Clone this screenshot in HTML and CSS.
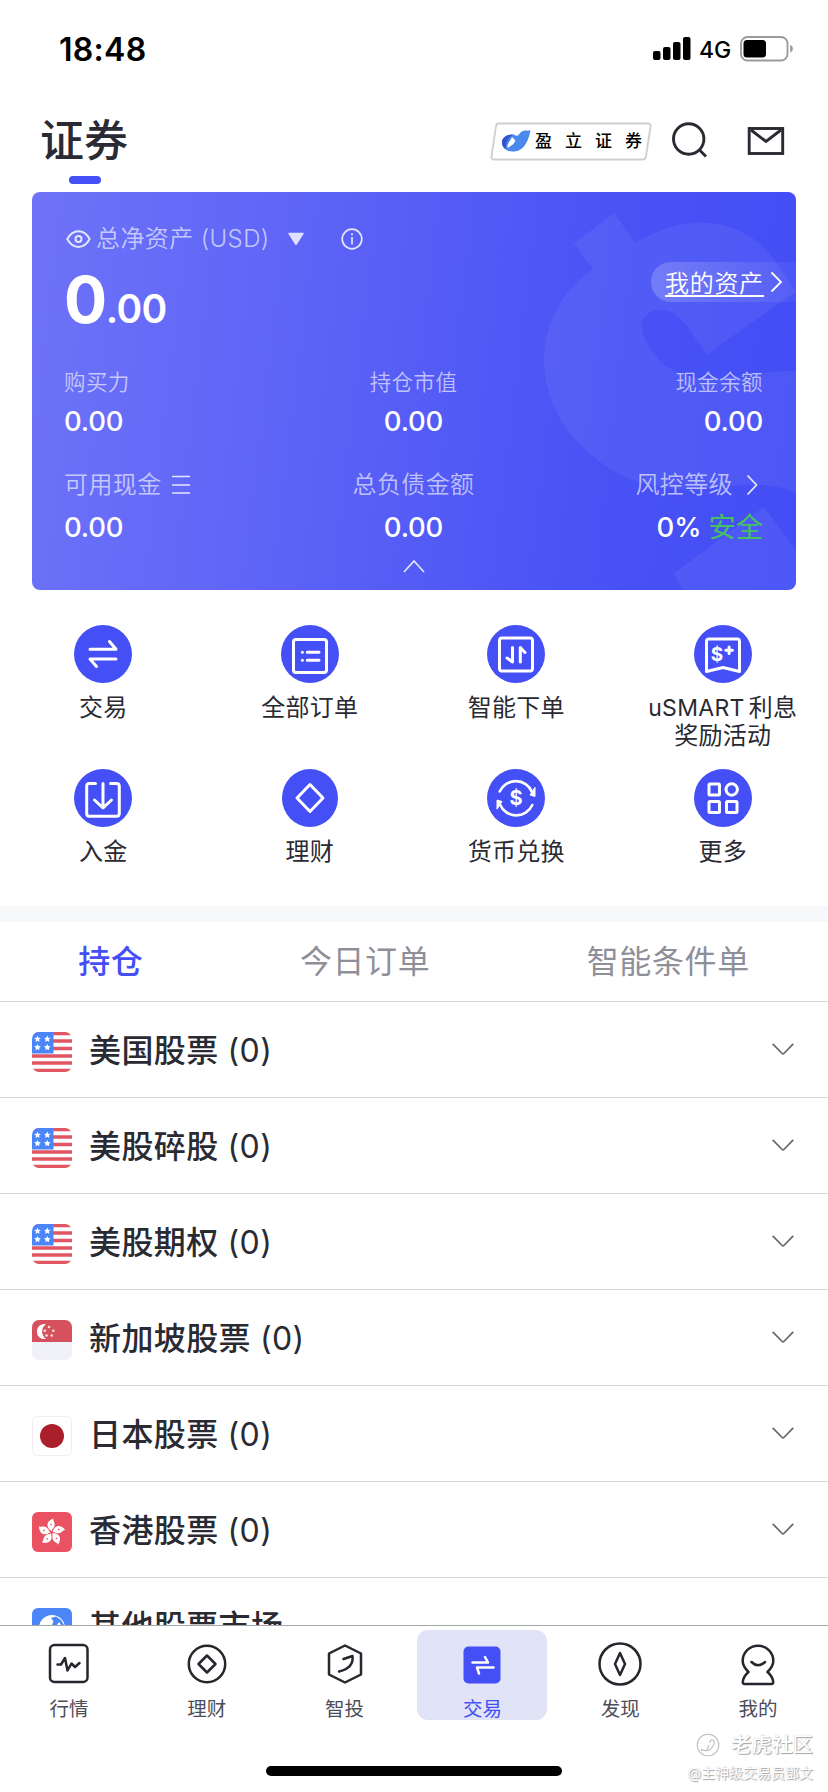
FILE: index.html
```html
<!DOCTYPE html>
<html lang="zh-CN">
<head>
<meta charset="utf-8">
<title>证券</title>
<link rel="stylesheet" href="styles.css">
</head>
<body>
<svg width="0" height="0" class="defs">
  <symbol id="flag-us" viewBox="0 0 40 40">
    <clipPath id="rc"><rect width="40" height="40" rx="7"/></clipPath>
    <g clip-path="url(#rc)">
      <rect width="40" height="40" fill="#fff"/>
      <path d="M0 1.500h40M0 9h40M0 16.500h40M0 24h40M0 31h40M0 38.500h40" stroke="#e25563" stroke-width="3.300"/>
      <rect width="21.500" height="21.500" fill="#4a86f7"/>
      <path id="star" fill="#fff" d="M5.500 3.600l1 2.100 2.300.3-1.700 1.600.4 2.300-2-1.100-2 1.100.4-2.300-1.700-1.600 2.300-.3z"/>
      <use href="#star" x="9.800"/><use href="#star" y="8.300"/><use href="#star" x="9.800" y="8.300"/>
    </g>
  </symbol>
  <symbol id="chev" viewBox="0 0 22 13"><path d="M1.200 1.300L10.200 10.500Q11 11.300 11.800 10.500L20.800 1.300" fill="none" stroke="#66666b" stroke-width="1.700" stroke-linecap="round"/></symbol>
</svg>
<div class="page">
  <div class="status">
    <span class="clock">18:48</span>
    <div class="status-right">
      <svg width="38" height="24" viewBox="0 0 38 24"><rect x="0" y="14" width="7.500" height="9" rx="2"/><rect x="10" y="10" width="7.500" height="13" rx="2"/><rect x="20" y="5" width="7.500" height="18" rx="2"/><rect x="30" y="0" width="7.500" height="23" rx="2"/></svg>
      <span class="net">4G</span>
      <svg width="54" height="26" viewBox="0 0 54 26"><rect x="1" y="1" width="46.500" height="23.500" rx="6.500" fill="none" stroke="#9b9b9b" stroke-width="1.800"/><rect x="3.500" y="4" width="22.500" height="17.500" rx="3.500"/><path d="M50.200 8.800a4.300 4.300 0 0 1 0 8z" fill="#9b9b9b"/></svg>
    </div>
  </div>
  <header class="head">
    <div class="title"><h1>证券</h1><i></i></div>
    <div class="tools">
      <div class="badge">
        <svg class="badge-bg" width="162" height="39" viewBox="0 0 162 39"><path d="M8.500 1.500H158Q161 1.500 160.500 4.500L156 34.500Q155.500 37.500 152.500 37.500H4Q1 37.500 1.500 34.500L6 4Q6.500 1.500 8.500 1.500Z" fill="#fff" stroke="#cfcfd0" stroke-width="1.800"/></svg>
        <svg width="30" height="24" viewBox="0 0 30 24"><path d="M13 5.500C6 5 .5 9 1 14C1.500 20 7 23 13 22.500C23 22 27.500 12 29.500 1C26.500 2.800 25 .5 21 2.500C17.500 4.300 17.500 9 13 5.500Z" fill="#4a88ee"/><path d="M12 5.500C6 5 .5 9 1 14C1.200 16.500 2.500 18.500 4.500 20C4.500 14 7 9 12 5.500Z" fill="#3454cf"/><path d="M11 8L14.500 11.500L12.500 15L6.800 19C5.500 14.500 9 13 11 8Z" fill="#fff"/></svg>
        <span>盈立证券</span>
      </div>
      <svg class="search" width="38" height="38" viewBox="0 0 38 38"><circle cx="17.700" cy="17" r="15.200"/><path d="M28.500 28L35 34.500"/></svg>
      <svg class="mail" width="38" height="30" viewBox="0 0 38 30"><rect x="2.200" y="2.500" width="33.500" height="25"/><path d="M4 4L19 15.500L34 4"/></svg>
    </div>
  </header>

  <section class="card">
    <svg class="mark" width="764" height="398" viewBox="0 0 764 398"><g transform="translate(382 -12) scale(.33333)" fill="#fff" fill-opacity=".06"><path d="M600 100L665 188C740 145 810 125 875 128C975 133 1050 185 1095 260L1146 335L878 523L820 440C790 400 765 388 735 390C690 393 670 430 692 475C730 560 800 600 900 595C990 590 1070 570 1146 573V940C1090 912 1030 912 960 917C860 925 770 945 640 893C480 820 390 680 390 540C392 420 455 320 538 268L480 190Z"/><path d="M1050 980L1146 1110V1230H805L780 1180Z"/></g></svg>
    <div class="net-row">
      <svg width="25" height="20" viewBox="0 0 25 20" fill="none" stroke="#e4e6fe" stroke-width="2"><path d="M1.300 10C7 -.5 18 -.5 23.700 10C18 20.500 7 20.500 1.300 10Z"/><circle cx="12.500" cy="10" r="3"/></svg>
      <span class="lbl net-lbl">总净资产 <span>(USD)</span></span>
      <svg class="tri" width="18" height="14" viewBox="0 0 18 14"><path d="M2 .8H16Q17.300 .8 16.500 2L10 12.300Q9 13.800 8 12.300L1.500 2Q.7 .8 2 .8Z" fill="#dfe1fe"/></svg>
      <svg class="info" width="24" height="24" viewBox="0 0 24 24" fill="none" stroke="#e4e6fe" stroke-width="1.700"><circle cx="12" cy="12" r="9.800"/><path d="M12 10v7.500M12 6.300v2"/></svg>
    </div>
    <div class="total"><b>0</b><small>.00</small></div>
    <a class="pill"><span>我的资产</span><svg width="13" height="22" viewBox="0 0 13 22"><path d="M1.500 1.500L11 11L1.500 20.500" fill="none" stroke="#fff" stroke-width="1.800"/></svg></a>
    <div class="stats first">
      <div><div class="lbl sm">购买力</div><div class="val">0.00</div></div>
      <div class="mid"><div class="lbl sm">持仓市值</div><div class="val">0.00</div></div>
      <div class="end"><div class="lbl sm">现金余额</div><div class="val">0.00</div></div>
    </div>
    <div class="stats second">
      <div><div class="lbl">可用现金<svg class="burger" width="18" height="20" viewBox="0 0 18 20"><path d="M0 1.500h18M0 10h18M0 18h18" stroke="#e4e6fe" stroke-width="1.700"/></svg></div><div class="val">0.00</div></div>
      <div class="mid"><div class="lbl">总负债金额</div><div class="val">0.00</div></div>
      <div class="end"><div class="lbl risk">风控等级<svg width="12" height="22" viewBox="0 0 12 22"><path d="M1.500 1.500L10.500 11L1.500 20.500" fill="none" stroke="#e4e6fe" stroke-width="1.800"/></svg></div><div class="val">0% <em>安全</em></div></div>
    </div>
    <svg class="fold" width="22" height="14" viewBox="0 0 22 14"><path d="M1 13L11 2L21 13" fill="none" stroke="#e4e6fe" stroke-width="1.700"/></svg>
  </section>

  <nav class="actions">
    <a><svg viewBox="0 0 58 58"><circle cx="29" cy="29" r="29"/><path class="s3" d="M16 24.300H42L35.500 16.500M42 34H16L22.500 41.500"/></svg><span>交易</span></a>
    <a><svg viewBox="0 0 58 58"><circle cx="29" cy="29" r="29"/><rect class="s3" x="12.500" y="14.500" width="33" height="33" rx="2.500"/><path class="s3" d="M21.300 27.300h.1M26.300 27.300H38M21.300 35.300h.1M26.300 35.300H38"/></svg><span>全部订单</span></a>
    <a><svg viewBox="0 0 58 58"><circle cx="29" cy="29" r="29"/><rect class="s3" x="12.500" y="13" width="33" height="33" rx="2.500"/><path class="s3" d="M25.500 22.500V37L20 33M33.300 37V22.500L38 27.500"/></svg><span>智能下单</span></a>
    <a><svg viewBox="0 0 58 58"><circle cx="29" cy="29" r="29"/><path class="s3" d="M15 14H43Q45.500 14 45.500 16.500V46.500L29 42.500L12.500 46.500V16.500Q12.500 14 15 14Z"/><text x="23" y="35.500" font-size="19">$</text><path class="s3" d="M31.800 25.200h6.600M35.100 21.900v6.600"/></svg><span><small>uSMART</small> 利息<br>奖励活动</span></a>
    <a><svg viewBox="0 0 58 58"><circle cx="29" cy="29" r="29"/><path class="s3" d="M21.500 14.500H15.500Q12.700 14.500 12.700 17.300V44.500Q12.700 47.200 15.500 47.200H42.500Q45.300 47.200 45.300 44.500V17.300Q45.300 14.500 42.500 14.500H36.500M29 14.500V38.500M20.500 31L29 39L37.500 31"/></svg><span>入金</span></a>
    <a><svg viewBox="0 0 58 58"><ellipse cx="29" cy="29" rx="28" ry="29"/><path class="s3" d="M29 15.500L42 29L29 42.500L16 29Z"/></svg><span>理财</span></a>
    <a><svg viewBox="0 0 58 58"><circle cx="29" cy="29" r="29"/><path class="s25" d="M12.700 22.500A17.600 17.600 0 0 1 45 23M45.300 36A17.600 17.600 0 0 1 13 35.500"/><path d="M43 26L48 18.300V27.500ZM15 32.500L10 40.200V31Z" class="w"/><text x="29" y="36.300" font-size="20">$</text></svg><span>货币兑换</span></a>
    <a><svg viewBox="0 0 58 58"><circle cx="29" cy="29" r="29"/><rect class="s3" x="15" y="15" width="10.500" height="11" rx="1"/><circle class="s3" cx="37.700" cy="20.500" r="5.700"/><rect class="s3" x="15" y="32.500" width="10.500" height="11" rx="1"/><rect class="s3" x="32.500" y="32.500" width="10.500" height="11" rx="1"/></svg><span>更多</span></a>
  </nav>

  <div class="tabs"><span class="on">持仓</span><span>今日订单</span><span>智能条件单</span></div>

  <main class="list">
    <div class="row"><svg class="flag"><use href="#flag-us"/></svg><span>美国股票 <b>(0)</b></span><svg class="chev"><use href="#chev"/></svg></div>
    <div class="row"><svg class="flag"><use href="#flag-us"/></svg><span>美股碎股 <b>(0)</b></span><svg class="chev"><use href="#chev"/></svg></div>
    <div class="row"><svg class="flag"><use href="#flag-us"/></svg><span>美股期权 <b>(0)</b></span><svg class="chev"><use href="#chev"/></svg></div>
    <div class="row"><svg class="flag" viewBox="0 0 40 40"><g clip-path="url(#rc)"><rect width="40" height="40" fill="#f0f0f7"/><rect width="40" height="22" fill="#d4515d"/></g><path d="M14 4.200A7.500 7.500 0 1 0 14 18.800A8.800 8.800 0 0 1 14 4.200Z" fill="#fff"/><g fill="#fbdfe2"><circle cx="17" cy="7" r="1.300"/><circle cx="12.800" cy="10.800" r="1.300"/><circle cx="21.300" cy="10.800" r="1.300"/><circle cx="14.500" cy="15.500" r="1.300"/><circle cx="19.700" cy="15.500" r="1.300"/></g></svg><span>新加坡股票 <b>(0)</b></span><svg class="chev"><use href="#chev"/></svg></div>
    <div class="row"><svg class="flag" viewBox="0 0 40 40"><rect x=".5" y=".5" width="39" height="39" rx="5" fill="#fff" stroke="#f1ecee"/><circle cx="20" cy="20" r="12" fill="#ab1f2d"/></svg><span>日本股票 <b>(0)</b></span><svg class="chev"><use href="#chev"/></svg></div>
    <div class="row"><svg class="flag" viewBox="0 0 40 40"><rect width="40" height="40" rx="6" fill="#ea5161"/><g fill="#fff"><path id="pt" d="M19.500 19C13.500 15.500 14 9 21.500 6.500C20.500 9 23.500 10.500 22.500 14C22 16.300 20 17 19.500 19Z"/><use href="#pt" transform="rotate(72 19.500 20.300)"/><use href="#pt" transform="rotate(144 19.500 20.300)"/><use href="#pt" transform="rotate(216 19.500 20.300)"/><use href="#pt" transform="rotate(288 19.500 20.300)"/></g><g fill="#ea5161"><circle id="pd" cx="19" cy="12.500" r=".8"/><use href="#pd" transform="rotate(72 19.500 20.300)"/><use href="#pd" transform="rotate(144 19.500 20.300)"/><use href="#pd" transform="rotate(216 19.500 20.300)"/><use href="#pd" transform="rotate(288 19.500 20.300)"/></g></svg><span>香港股票 <b>(0)</b></span><svg class="chev"><use href="#chev"/></svg></div>
    <div class="row"><svg class="flag" viewBox="0 0 40 40"><rect width="40" height="40" rx="6" fill="#4a86f7"/><circle cx="20" cy="20" r="13" fill="#fff"/><path d="M19 10L24 8.500L29 12L32 17L30 18L27 14L25 17H20L21.500 13.500Z" fill="#4a86f7"/></svg><span>其他股票市场</span></div>
  </main>

  <footer class="tabbar">
    <div class="items">
      <a><svg viewBox="0 0 44 44"><rect x="3" y="3" width="37.500" height="37" rx="4.500"/><path d="M10.500 22.500H14L18 16L20.500 28.500L24.500 21.500L28 25L32.500 21"/></svg><span>行情</span></a>
      <a><svg viewBox="0 0 44 44"><circle cx="22" cy="22" r="18.200"/><path d="M22 13.500L30.500 22L22 30.500L13.500 22Z"/></svg><span>理财</span></a>
      <a><svg viewBox="0 0 44 44"><path d="M22 3.500L38 11.500V32.500L22 40.500L6 32.500V11.500Z"/><path d="M20.500 17L29.500 14Q31 26 16 29.500"/></svg><span>智投</span></a>
      <a class="on"><svg viewBox="0 0 44 44"><rect x="3.500" y="4.500" width="37" height="37" rx="5" fill="#444ff5" stroke="none"/><path stroke="#fff" d="M12.500 20.500H28L25 15M33.500 25.500H17L19 31.500"/></svg><span>交易</span></a>
      <a><svg viewBox="0 0 44 44"><circle cx="22" cy="22" r="20.500"/><path d="M22 11L27 22L22 33L17 22Z"/></svg><span>发现</span></a>
      <a><svg viewBox="0 0 44 44"><path d="M12.500 30C9 26.500 6.700 23 6.700 19A15.300 15.300 0 0 1 37.300 19C37.300 23 35 26.500 31.500 30Q36.500 34 37.200 40Q37.300 42 35.500 42H8.500Q6.700 42 6.800 40Q7.500 34 12.500 30Z"/><path d="M15.500 20Q22 26.500 29 20"/></svg><span>我的</span></a>
    </div>
    <i class="home"></i>
    <div class="wm">
      <div class="wm-a"><svg width="24" height="24" viewBox="0 0 24 24" fill="none" stroke="#bdbdc2" stroke-width="1.100"><circle cx="12" cy="12" r="10.800"/><path d="M5 16.500Q13 20 17 13Q19.500 8.500 17 7Q14 6 14 10M13 12.500L11 16.500M6 16l-1 2"/></svg><span>老虎社区</span></div>
      <div class="wm-b">@主神级交易员鄧文</div>
    </div>
  </footer>
</div>
</body>
</html>
```
FILE: styles.css
```css
* { box-sizing: border-box; }
body { margin: 0; background: #fff; font-family: Inter, "Noto Sans CJK SC", sans-serif; color: #2a2a33; }
svg { display: block; flex: none; overflow: visible; }
.defs { position: absolute; }
.page { width: 828px; height: 1792px; display: flex; flex-direction: column; overflow: hidden; }

.status { height: 98px; padding: 0 34px 0 59px; display: flex; justify-content: space-between; align-items: center; flex: none; color: #000; }
.clock { font-size: 32px; font-weight: 600; line-height: 40px; margin-top: 2px; letter-spacing: .3px; }
.status-right { display: flex; align-items: center; }
.net { font-size: 23px; font-weight: 500; width: 49px; padding: 2px 0 0 8px; white-space: nowrap; }

.head { height: 94px; flex: none; padding: 14px 43px 0 40px; display: flex; justify-content: space-between; align-items: flex-start; }
.title { display: flex; flex-direction: column; align-items: center; }
h1 { margin: 0; font-size: 44px; line-height: 56px; font-weight: 450; }
.title h1 { padding-top: 1px; }
.title i { width: 32px; height: 8px; border-radius: 4px; background: #444ff5; margin: 7px 0 0 2px; }
.tools { display: flex; align-items: center; height: 56px; }
.badge { width: 162px; height: 39px; display: flex; align-items: center; padding-left: 11px; position: relative; margin: 2px 19px 0 0; }
.badge svg, .badge span { position: relative; }
.badge .badge-bg { position: absolute; left: 0; top: 0; }
.badge span { font-size: 17px; line-height: 24px; letter-spacing: 13px; margin-left: 4px; font-weight: 500; color: #000; white-space: nowrap; }
.search, .mail { fill: none; stroke: #2a2a33; stroke-width: 2.900; margin-top: 1px; }
.mail { margin-left: 38px; }

.card { position: relative; height: 398px; flex: none; margin: 0 32px; border-radius: 8px; overflow: hidden; background: linear-gradient(97deg, #6e73f8 0%, #5c62f6 38%, #4852f5 75%, #424df5 100%); color: #fff; padding: 30px 33px 0 32px; }
.mark { position: absolute; left: 0; top: 0; }
.net-row { display: flex; align-items: center; height: 34px; position: relative; padding-left: 2px; }
.lbl { color: rgba(255,255,255,.63); font-size: 24px; line-height: 34px; letter-spacing: .4px; font-weight: 350; white-space: nowrap; }
.net-lbl { margin-left: 5px; width: 176px; }
.net-lbl span { font-size: 24px; }
.tri { margin-left: 15px; }
.info { margin-left: 35px; }
.total { position: relative; display: flex; align-items: baseline; height: 72px; line-height: 72px; margin-top: 8px; font-weight: 700; }
.total b { font-size: 64px; letter-spacing: -1.500px; font-weight: 680; }
.total small { font-size: 39px; font-weight: 640; letter-spacing: -.6px; }
.pill { position: absolute; right: 0; top: 70px; width: 145px; height: 40px; border-radius: 20px 0 0 20px; background: linear-gradient(90deg, rgba(255,255,255,.2), rgba(255,255,255,.04)); display: flex; align-items: center; padding-left: 14px; }
.pill span { font-size: 24px; line-height: 25px; height: 26px; letter-spacing: .7px; border-bottom: 2px solid #fff; margin-top: 3px; font-weight: 350; white-space: nowrap; }
.pill svg { margin-left: 6px; }
.stats { position: relative; display: grid; grid-template-columns: 1fr 1fr 1fr; }
.stats .lbl { display: flex; align-items: center; }
.lbl.sm { font-size: 21.500px; }
.first { margin-top: 29px; }
.second { margin-top: 25px; }
.mid { display: flex; flex-direction: column; align-items: center; }
.end { display: flex; flex-direction: column; align-items: flex-end; }
.val { font-size: 27.500px; line-height: 44px; font-weight: 450; letter-spacing: -.2px; white-space: nowrap; }
.second .val { margin-top: 3px; }
.val em { font-style: normal; color: #45c163; font-weight: 400; margin-left: 0; }
.burger { margin-left: 10px; }
.risk svg { margin: 0 5px 0 13px; }
.fold { position: relative; margin: 10px auto 0; }

.actions { height: 316px; flex: none; width: 826px; display: grid; grid-template-columns: repeat(4, 1fr); grid-auto-rows: 144px; padding-top: 35px; }
.actions a { display: flex; flex-direction: column; align-items: center; }
.actions svg { width: 58px; height: 58px; fill: #444ff5; }
.actions span { font-size: 24px; line-height: 28px; letter-spacing: .3px; margin-top: 11px; text-align: center; white-space: nowrap; font-weight: 370; }
.actions small { font-size: 23px; margin-right: -3px; }
.s3, .s25 { fill: none; stroke: #fff; stroke-width: 3; stroke-linecap: round; stroke-linejoin: round; }
.s25 { stroke-width: 2.600; }
.w { fill: #fff; stroke: #fff; stroke-width: 1; stroke-linejoin: round; }
.actions text { fill: #fff; font-weight: 700; text-anchor: middle; }

.tabs { flex: none; height: 96px; border-top: 16px solid #f7f8fa; border-bottom: 1px solid #d5d5d8; display: flex; justify-content: space-around; align-items: center; font-size: 32px; letter-spacing: .6px; color: #8f8f99; }
.tabs span { line-height: 40px; }
.tabs .on { color: #444ff5; font-weight: 500; }

.list { flex: 1; min-height: 0; overflow: hidden; }
.row { height: 96px; border-bottom: 1px solid #d5d5d8; padding: 0 34px 0 32px; display: flex; align-items: center; font-size: 32px; letter-spacing: .4px; font-weight: 480; }
.row span { flex: 1; margin: 3px 0 0 17px; line-height: 44px; }
.row b { font-weight: 430; }
.flag { width: 40px; height: 40px; margin-top: 4px; }
.chev { width: 22px; height: 13px; }

.tabbar { position: relative; flex: none; height: 167px; border-top: 1px solid #a3a8a6; background: #fff; }
.items { display: grid; grid-template-columns: repeat(6, 1fr); padding: 4px 1px 0 0; }
.items a { height: 90px; width: 130px; justify-self: center; display: flex; flex-direction: column; align-items: center; padding-top: 12px; border-radius: 11px; color: #4d4d5a; font-size: 19.500px; }
.items svg { width: 44px; height: 44px; fill: none; stroke: #26262e; stroke-width: 2.500; stroke-linecap: round; stroke-linejoin: round; }
.items span { line-height: 26px; margin-top: 10px; }
.items .on { background: #e1e3f7; color: #444ff5; }
.home { display: block; width: 296px; height: 10px; border-radius: 5px; background: #000; margin: 46px auto 0; }
.wm { position: absolute; right: 15px; top: 105px; display: flex; flex-direction: column; align-items: flex-end; color: #fff; text-shadow: 1px 1px 1px #a2a2a8, 0 0 1px #c4c4c8; }
.wm-a { display: flex; align-items: center; gap: 11px; font-size: 20.500px; line-height: 28px; font-weight: 500; }
.wm-b { font-size: 14px; line-height: 20px; margin-top: 4px; white-space: nowrap; }
```
